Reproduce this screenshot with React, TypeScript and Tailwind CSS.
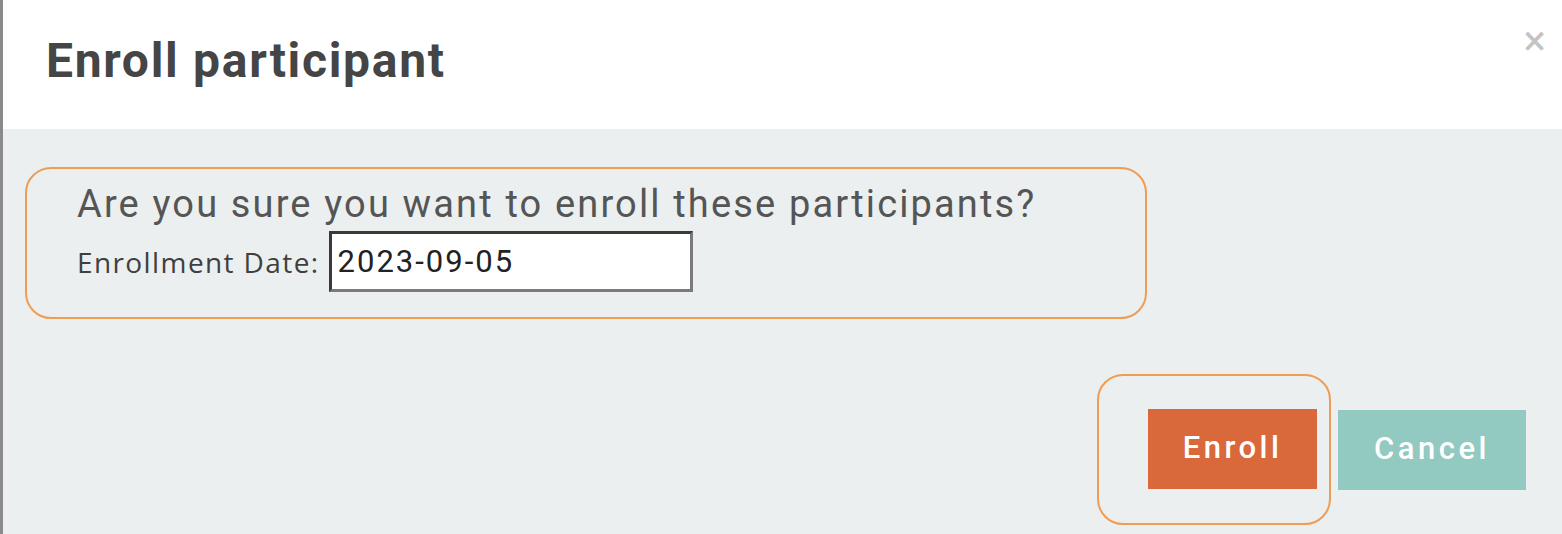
import React, { useState } from 'react';

const App: React.FC = () => {
    const [date, setDate] = useState('2023-09-05');

    return (
        <div className="w-[1562px] h-[534px] flex flex-col bg-[#ebeff0] border-l-[3px] border-[#8a8a8a] overflow-hidden" style={{ fontFamily: 'Roboto, "Liberation Sans", sans-serif' }}>
            {/* header */}
            <div className="relative h-[129px] bg-white flex items-center pl-[43px]">
                <h1 className="text-[48px] font-bold text-[#454545] leading-none tracking-[1.7px] -mt-[8px]">Enroll participant</h1>
                <button className="absolute right-[16px] top-[20px] text-[42px] leading-none text-[#c4c4c4]">×</button>
            </div>

            {/* body */}
            <div className="flex-1 flex flex-col pl-[22px] pr-[36px]">
                <div className="mt-[38px] w-[1122px] h-[152px] rounded-[26px] border-2 border-[#ef9d55] pl-[50px] pt-[10px]">
                    <p className="text-[38px] text-[#555] leading-[50px] tracking-[2.15px]">Are you sure you want to enroll these participants?</p>
                    <div className="flex items-center mt-[2px]">
                        <label className="text-[28px] text-[#3f3f3f] mr-[9px] tracking-[1.4px]" style={{ fontFamily: '"Open Sans", Roboto, sans-serif' }}>Enrollment Date:</label>
                        <input
                            value={date}
                            onChange={(e) => setDate(e.target.value)}
                            className="w-[364px] h-[61px] bg-white border-[3px] border-t-[#3a3a3a] border-l-[#3a3a3a] border-r-[#7a7a7a] border-b-[#7a7a7a] px-[6px] text-[31px] tracking-[2px] text-[#222] outline-none"
                        />
                    </div>
                </div>

                <div className="flex justify-end items-center mt-[55px]">
                    <div className="w-[234px] h-[151px] rounded-[26px] border-2 border-[#ef9d55] flex items-center justify-end pr-[12px] mr-[7px]">
                        <button className="w-[169px] h-[80px] bg-[#d9693a] text-white text-[31px] font-medium tracking-[3.5px] -mt-[2px]">Enroll</button>
                    </div>
                    <button className="w-[188px] h-[80px] bg-[#92c9c1] text-white text-[31px] font-medium tracking-[3.5px]">Cancel</button>
                </div>
            </div>
        </div>
    );
};

export default App;
